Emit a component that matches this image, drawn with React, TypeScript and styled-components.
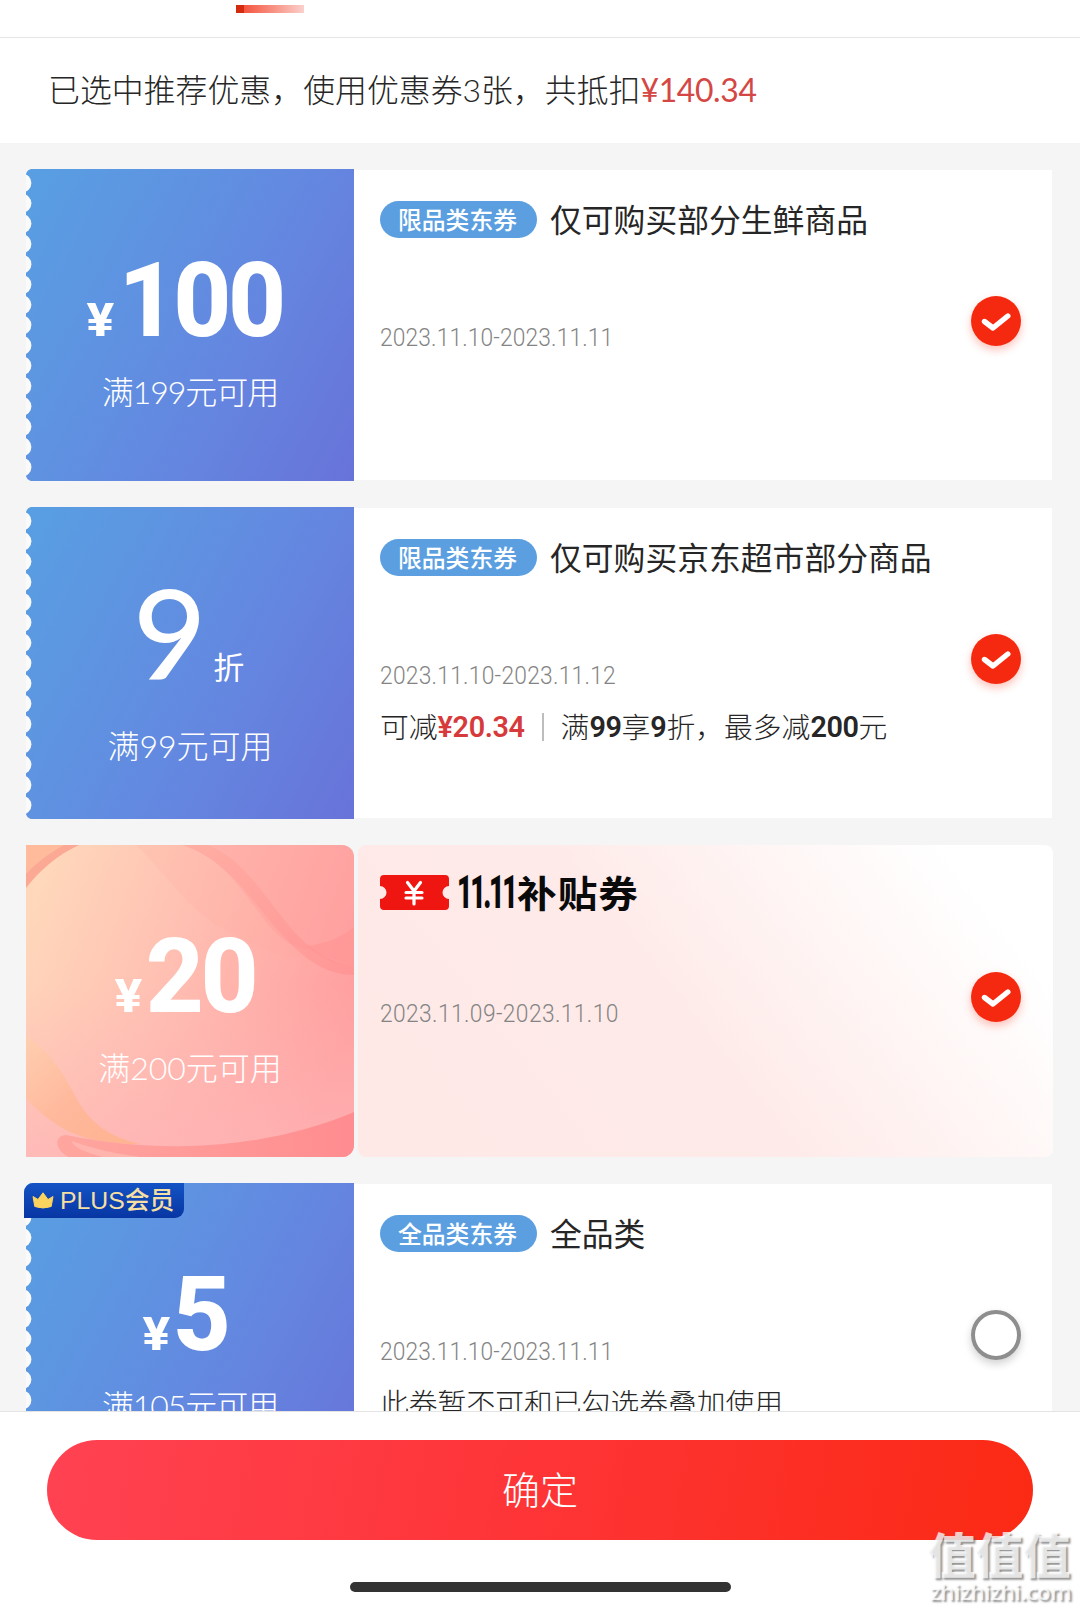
import styled, { createGlobalStyle, css } from 'styled-components'

const GlobalStyle = createGlobalStyle`
  * {
    box-sizing: border-box;
  }
  body {
    margin: 0;
    background: #fff;
    font-family: Lato, 'Noto Sans CJK SC', sans-serif;
    font-weight: 300;
    color: #262626;
  }
`

const Page = styled.div`
  display: flex;
  flex-direction: column;
  width: 1080px;
  height: 1611px;
  overflow: hidden;
  position: relative;
  background: #fff;
`

const TabBar = styled.div`
  height: 38px;
  padding: 5px 0 0 236px;
  border-bottom: 1px solid #e6e6e6;
`

const TabIndicator = styled.div`
  width: 68px;
  height: 8px;
  background: linear-gradient(90deg, #d42a10 0 8px, #f4553f 8px, #fbd0cb 100%);
`

const Summary = styled.div`
  height: 105px;
  padding-left: 48px;
  font-size: 31.9px;
  line-height: 105px;
  white-space: nowrap;
`

const SummaryAmount = styled.span`
  color: #d54744;
  font-weight: 400;
  letter-spacing: -0.35px;
`

const List = styled.div`
  flex: 1;
  min-height: 0;
  overflow: hidden;
  display: flex;
  flex-direction: column;
  gap: 26px;
  padding: 26px 27px 0 26px;
  background: #f5f5f5;
`

const Coupon = styled.div`
  display: flex;
  flex: none;
  height: 312px;
  position: relative;
`

const Face = styled.div<{ $pink?: boolean; $discount?: boolean }>`
  position: relative;
  width: 328px;
  display: flex;
  flex-direction: column;
  align-items: center;
  padding-top: ${(p) => (p.$discount ? 73 : 79.5)}px;
  color: #fff;
  overflow: hidden;
  ${(p) =>
    p.$pink
      ? css`
          border-radius: 0 12px 12px 0;
        `
      : css`
          background: linear-gradient(
            118deg,
            #589fe2 0%,
            #5f92e1 35%,
            #6486e0 62%,
            #6873d9 100%
          );
        `}
`

const Edge = styled.svg`
  position: absolute;
  left: 0;
  top: 0;
`

const PinkArt = styled.svg`
  position: absolute;
  inset: 0;
`

const Amount = styled.div<{ $shift?: number }>`
  position: relative;
  display: flex;
  align-items: baseline;
  height: 104px;
  line-height: 104px;
  font-family: Roboto, sans-serif;
  font-weight: 800;
  margin-right: ${(p) => p.$shift ?? 7}px;
`

const Yen = styled.span`
  font-size: 46px;
  margin-right: 3px;
  transform: scaleX(1.12);
`

const Digits = styled.span`
  font-size: 104px;
  letter-spacing: -3.5px;
  transform: scaleX(0.97);
`

const Nine = styled.span`
  font-family: Lato, sans-serif;
  font-weight: 500;
  font-size: 123px;
  transform: scaleX(1.03);
`

const Zhe = styled.span`
  font-family: 'Noto Sans CJK SC', sans-serif;
  font-weight: 400;
  font-size: 31px;
  margin-left: 8px;
`

const Condition = styled.div<{ $tracking?: number; $low?: boolean }>`
  position: relative;
  margin-top: ${(p) => (p.$low ? 41 : 18)}px;
  font-size: 32px;
  line-height: 41px;
  white-space: nowrap;
  letter-spacing: ${(p) => p.$tracking ?? 0}px;
`

const Body = styled.div<{ $pink?: boolean }>`
  flex: 1;
  position: relative;
  display: flex;
  justify-content: space-between;
  margin: ${(p) => (p.$pink ? '0 0 0 4px' : '1px 1px 1px 0')};
  padding: ${(p) => (p.$pink ? '0 32px 0 22px' : '0 31px 0 26px')};
  border-radius: ${(p) => (p.$pink ? 8 : 0)}px;
  background: ${(p) =>
    p.$pink
      ? 'linear-gradient(52deg, #fee9e7 0%, #feeae8 45%, #fff 88%)'
      : '#fff'};
`

const Info = styled.div<{ $pink?: boolean }>`
  display: flex;
  flex-direction: column;
  padding-top: ${(p) => (p.$pink ? 25 : 31)}px;
  white-space: nowrap;
`

const Heading = styled.div`
  display: flex;
  align-items: center;
  height: 37px;
`

const Tag = styled.span`
  width: 157px;
  height: 37px;
  padding-right: 2px;
  border-radius: 19px;
  background: #5c9fe1;
  color: #fff;
  font-family: 'Noto Sans CJK SC', sans-serif;
  font-size: 23.8px;
  font-weight: 500;
  line-height: 35px;
  text-align: center;
`

const Title = styled.span`
  margin-left: 13px;
  font-size: 31.8px;
  font-weight: 400;
  line-height: 38px;
`

const DateRange = styled.div<{ $pink?: boolean; $tracking?: number }>`
  margin-top: ${(p) => (p.$pink ? 81 : 81)}px;
  height: 36px;
  line-height: 36px;
  font-family: Roboto, sans-serif;
  font-size: 26.5px;
  color: #848484;
  transform: scaleX(0.86);
  transform-origin: left;
  letter-spacing: ${(p) => p.$tracking ?? 0.15}px;
`

const Detail = styled.div`
  display: flex;
  align-items: center;
  margin-top: 14px;
  height: 40px;
  font-size: 28.8px;
  line-height: 40px;

  b {
    font-family: Roboto, sans-serif;
    font-weight: 600;
    letter-spacing: -0.4px;
  }
`

const Saving = styled.b`
  color: #d63a3a;
`

const Divider = styled.i`
  width: 2px;
  height: 28px;
  margin: 0 17px 0 17px;
  background: #bdbdbd;
`

const Promo = styled.div`
  display: flex;
  align-items: center;
  height: 44px;
  color: #0a0a0a;
`

const PromoDigits = styled.span`
  width: 58px;
  margin-left: 8px;
  font-family: Roboto, sans-serif;
  font-size: 46px;
  font-weight: 900;
  line-height: 44px;
  letter-spacing: -4px;
  transform: scaleX(0.58);
  transform-origin: left;
`

const PromoName = styled.span`
  margin-left: 2px;
  font-family: 'Noto Sans CJK SC', sans-serif;
  font-size: 37px;
  font-weight: 700;
  line-height: 42px;
  letter-spacing: 1px;
  transform: scaleX(1.07);
  transform-origin: left;
`

const Radio = styled.span<{ $checked?: boolean; $pink?: boolean }>`
  flex: none;
  width: 50px;
  height: 50px;
  margin-top: ${(p) => (p.$pink ? 127 : 126)}px;
  border-radius: 50%;
  ${(p) =>
    p.$checked
      ? css`
          background: #f5290f;
          box-shadow: 0 4px 8px rgba(245, 41, 15, 0.28);
        `
      : css`
          border: 4px solid #8e8e8e;
          box-shadow: 0 4px 8px rgba(0, 0, 0, 0.18);
        `}

  svg {
    display: block;
  }
`

const PlusBadge = styled.div`
  position: absolute;
  left: -2px;
  top: 0;
  display: flex;
  align-items: center;
  width: 160px;
  height: 35px;
  padding-left: 8px;
  border-radius: 9px 0 9px 0;
  background: linear-gradient(#1453c5, #0736a3);
  color: #f5dfa2;
  font-family: 'Liberation Sans', 'Noto Sans CJK SC', sans-serif;
  font-weight: 500;
  font-size: 24.8px;
  line-height: 36px;

  svg {
    margin-right: 6px;
  }
`

const Footer = styled.div`
  height: 200px;
  display: flex;
  flex-direction: column;
  align-items: center;
  padding-top: 28px;
  border-top: 1px solid #e4e4e4;
  background: #fff;
`

const Confirm = styled.button`
  width: 986px;
  height: 100px;
  padding: 0 0 6px;
  border: 0;
  border-radius: 50px;
  background: linear-gradient(100deg, #ff4252 0%, #fe3436 50%, #fb2a14 100%);
  color: #fff;
  font-family: 'Noto Sans CJK SC', sans-serif;
  font-size: 38px;
  font-weight: 300;
`

const HomeBar = styled.div`
  width: 381px;
  height: 10px;
  margin-top: 42px;
  border-radius: 5px;
  background: #333;
`

const Watermark = styled.div`
  position: absolute;
  left: 928px;
  top: 1526px;
  width: 146px;
  color: rgba(255, 255, 255, 0.75);
  text-shadow: 2px 2px 2px rgba(90, 90, 90, 0.65);
  white-space: nowrap;
`

const WatermarkName = styled.div`
  font-family: 'Noto Sans CJK SC', sans-serif;
  font-size: 47.5px;
  font-weight: 800;
  line-height: 54px;
`

const WatermarkSite = styled.div`
  font-family: 'Open Sans', sans-serif;
  font-size: 22.4px;
  font-weight: 600;
  line-height: 24px;
  letter-spacing: -0.35px;
  margin-left: 2px;
`

const Scallops = () => (
  <Edge width="6" height="312" viewBox="0 0 6 312">
    <path d="M0 0H5Q1 1 0 5Z" fill="#f5f5f5" />
    <path d="M0 312H5Q1 311 0 307Z" fill="#f5f5f5" />
    {Array.from({ length: 15 }, (_, i) => (
      <circle key={i} cx="-4" cy={14 + i * 20.3} r="9.4" fill="#fafafa" />
    ))}
  </Edge>
)

const PinkBackground = () => (
  <PinkArt width="328" height="312" viewBox="0 0 328 312">
    <defs>
      <linearGradient id="base" x1="0" y1="0.2" x2="1" y2="0.55">
        <stop offset="0" stopColor="#ffd8bb" />
        <stop offset="0.45" stopColor="#ffbfb2" />
        <stop offset="1" stopColor="#ff9e9f" />
      </linearGradient>
      <linearGradient id="low" x1="0" y1="0" x2="0" y2="1">
        <stop offset="0.45" stopColor="#ffb9b8" stopOpacity="0" />
        <stop offset="1" stopColor="#ffb5b8" stopOpacity="0.75" />
      </linearGradient>
      <linearGradient id="leaf" x1="0" y1="0" x2="1" y2="1">
        <stop offset="0" stopColor="#ffceb0" />
        <stop offset="0.5" stopColor="#ffb89c" />
        <stop offset="1" stopColor="#ffb38f" />
      </linearGradient>
      <linearGradient id="swoosh" x1="0" y1="0" x2="1" y2="0">
        <stop offset="0" stopColor="#ffa69f" />
        <stop offset="1" stopColor="#ff8c90" />
      </linearGradient>
      <linearGradient id="ribbon" x1="0" y1="0" x2="1" y2="1">
        <stop offset="0" stopColor="#ff9a8e" stopOpacity="0.25" />
        <stop offset="1" stopColor="#ff8789" stopOpacity="0.45" />
      </linearGradient>
    </defs>
    <rect width="328" height="312" fill="url(#base)" />
    <rect width="328" height="312" fill="url(#low)" />
    <path
      d="M110 0C135 22 165 70 200 85C245 112 275 116 300 112L262 98C230 60 205 20 156 0Z"
      fill="#ffa79b"
      fillOpacity="0.16"
    />
    <path d="M156 0C215 20 228 75 262 98L328 121V0Z" fill="#ff9c9c" fillOpacity="0.35" />
    <path
      d="M156 0C205 15 232 66 260 94C282 118 304 130 328 130V121C304 119 282 103 264 82C240 54 218 14 182 0Z"
      fill="url(#ribbon)"
    />
    <path d="M281 101C300 99 316 92 328 82V121C310 120 295 113 281 101Z" fill="#ff9292" fillOpacity="0.5" />
    <path d="M0 0H53C30 11 14 25 0 43Z" fill="#fba994" />
    <path d="M0 0H38C24 8 11 17 0 29Z" fill="#ffbb9c" />
    <path
      d="M0 192C22 203 36 226 52 256C66 280 85 292 114 299C72 299 45 290 30 279C15 269 5 259 0 253Z"
      fill="url(#leaf)"
    />
    <path
      d="M40 290C150 312 250 300 328 267V312H42C28 304 28 291 40 290Z"
      fill="url(#swoosh)"
    />
    <path d="M46 296C64 303 90 309 115 312H76C60 307 47 303 46 296Z" fill="#ffb4ad" />
  </PinkArt>
)

const TicketIcon = () => (
  <svg width="69" height="35" viewBox="0 0 69 35">
    <path
      d="M4 0H65Q69 0 69 4V11A6.5 6.5 0 0 0 69 24V31Q69 35 65 35H4Q0 35 0 31V24A6.5 6.5 0 0 0 0 11V4Q0 0 4 0Z"
      fill="#ef1611"
    />
    <path
      d="M27.5 7.5L34 16L40.5 7.5M34 16V29M26 17.5H42M26 23H42"
      fill="none"
      stroke="#fff"
      strokeWidth="3.2"
      strokeLinecap="round"
    />
  </svg>
)

const CrownIcon = () => (
  <svg width="22" height="17" viewBox="0 0 22 17">
    <path
      d="M1 4.5L6 7.5L11 0.8L16 7.5L21 4.5L19.2 14.5Q11 17.5 2.8 14.5Z"
      fill="#fcd35e"
      stroke="#fcd35e"
      strokeLinejoin="round"
    />
  </svg>
)

const Check = ({ checked, pink }: { checked?: boolean; pink?: boolean }) => (
  <Radio $checked={checked} $pink={pink}>
    {checked && (
      <svg width="50" height="50" viewBox="0 0 50 50">
        <path
          d="M13.5 25.5L22 32L36.8 20"
          fill="none"
          stroke="#fff"
          strokeWidth="5.4"
          strokeLinecap="round"
          strokeLinejoin="round"
        />
      </svg>
    )}
  </Radio>
)

export default function App() {
  return (
    <Page>
      <GlobalStyle />
      <TabBar>
        <TabIndicator />
      </TabBar>
      <Summary>
        已选中推荐优惠，使用优惠券3张，共抵扣
        <SummaryAmount>¥140.34</SummaryAmount>
      </Summary>

      <List>
        <Coupon>
          <Face>
            <Scallops />
            <Amount>
              <Yen>¥</Yen>
              <Digits>100</Digits>
            </Amount>
            <Condition $tracking={-1}>满199元可用</Condition>
          </Face>
          <Body>
            <Info>
              <Heading>
                <Tag>限品类东券</Tag>
                <Title>仅可购买部分生鲜商品</Title>
              </Heading>
              <DateRange>2023.11.10-2023.11.11</DateRange>
            </Info>
            <Check checked />
          </Body>
        </Coupon>

        <Coupon>
          <Face $discount>
            <Scallops />
            <Amount $shift={2}>
              <Nine>9</Nine>
              <Zhe>折</Zhe>
            </Amount>
            <Condition $low>满99元可用</Condition>
          </Face>
          <Body>
            <Info>
              <Heading>
                <Tag>限品类东券</Tag>
                <Title>仅可购买京东超市部分商品</Title>
              </Heading>
              <DateRange $tracking={0.3}>2023.11.10-2023.11.12</DateRange>
              <Detail>
                可减<Saving>¥20.34</Saving>
                <Divider />
                满<b>99</b>享<b>9</b>折，最多减<b>200</b>元
              </Detail>
            </Info>
            <Check checked />
          </Body>
        </Coupon>

        <Coupon>
          <Face $pink>
            <PinkBackground />
            <Amount>
              <Yen>¥</Yen>
              <Digits>20</Digits>
            </Amount>
            <Condition>满200元可用</Condition>
          </Face>
          <Body $pink>
            <Info $pink>
              <Promo>
                <TicketIcon />
                <PromoDigits>11.11</PromoDigits>
                <PromoName>补贴券</PromoName>
              </Promo>
              <DateRange $pink $tracking={0.45}>
                2023.11.09-2023.11.10
              </DateRange>
            </Info>
            <Check checked pink />
          </Body>
        </Coupon>

        <Coupon>
          <Face>
            <Scallops />
            <Amount>
              <Yen>¥</Yen>
              <Digits>5</Digits>
            </Amount>
            <Condition $tracking={-1}>满105元可用</Condition>
          </Face>
          <PlusBadge>
            <CrownIcon />
            PLUS会员
          </PlusBadge>
          <Body>
            <Info>
              <Heading>
                <Tag>全品类东券</Tag>
                <Title>全品类</Title>
              </Heading>
              <DateRange>2023.11.10-2023.11.11</DateRange>
              <Detail>此券暂不可和已勾选券叠加使用</Detail>
            </Info>
            <Check />
          </Body>
        </Coupon>
      </List>

      <Footer>
        <Confirm>确定</Confirm>
        <HomeBar />
      </Footer>

      <Watermark>
        <WatermarkName>值值值</WatermarkName>
        <WatermarkSite>zhizhizhi.com</WatermarkSite>
      </Watermark>
    </Page>
  )
}
